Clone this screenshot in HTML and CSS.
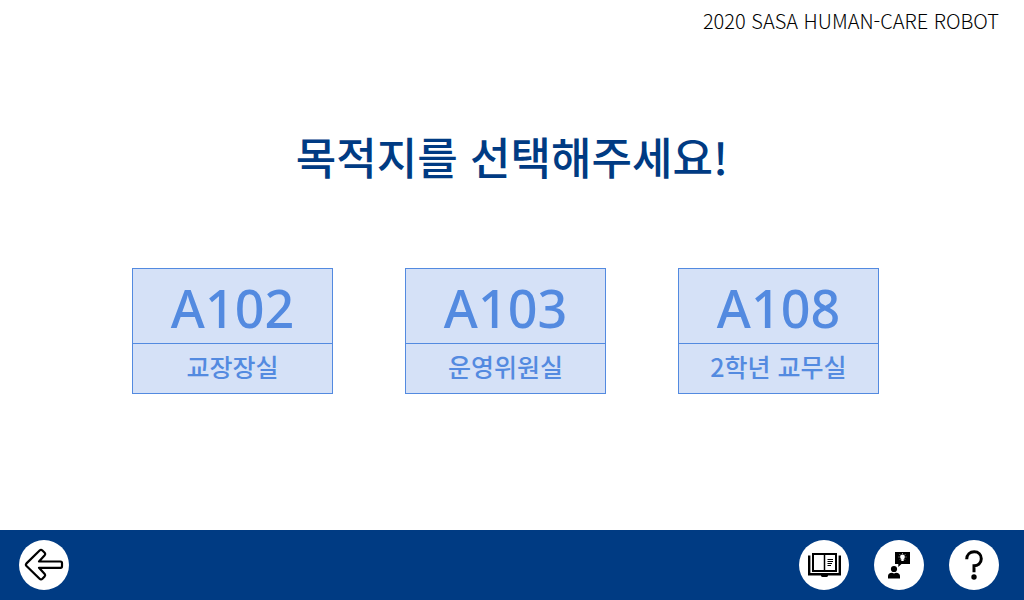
FILE: index.html
```html
<!DOCTYPE html>
<html lang="ko">
<head>
<meta charset="utf-8">
<meta name="viewport" content="width=device-width, initial-scale=1">
<title>2020 SASA HUMAN-CARE ROBOT</title>
<link rel="stylesheet" href="styles.css">
</head>
<body class="screen">
<header class="brand">2020 SASA HUMAN-CARE ROBOT</header>
<main class="content">
  <h1 class="title">목적지를 선택해주세요!</h1>
  <div class="rooms">
    <button class="room" type="button"><span class="room-number">A102</span><span class="room-name">교장장실</span></button>
    <button class="room" type="button"><span class="room-number">A103</span><span class="room-name">운영위원실</span></button>
    <button class="room" type="button"><span class="room-number">A108</span><span class="room-name">2학년 교무실</span></button>
  </div>
</main>
<footer class="toolbar">
  <button class="round" type="button" aria-label="뒤로">
    <svg class="icon" viewBox="0 0 50 50" fill="none" stroke="#000" stroke-width="2.2" stroke-linejoin="round"><path d="M7.5 23.400 20.600 10.500Q22 9.300 23.400 10.500L25.700 12.700Q26.800 14 25.700 15.300L20 21.500H41.500Q43 21.500 43 23V26.300Q43 27.800 41.500 27.800H20L25.700 34Q26.700 35.300 25.600 36.500L23.400 38.800Q22 40.200 20.600 38.800L7.500 26Q6.300 24.700 7.500 23.400Z"/></svg>
  </button>
  <div class="tools">
    <button class="round" type="button" aria-label="안내 책자">
      <svg class="icon" viewBox="0 0 50 50" fill="none" stroke="#000"><path stroke-width="2.400" d="M10.200 15.500V34.300H40.800V15.500"/><path stroke-width="2" d="M14 14H37V31H14Z"/><path stroke-width="1.500" d="M25.500 14V31"/><path stroke-width="1" d="M28.500 19.500H34M28.500 21.500H34M28.500 23.500H33M28.500 25.500H32"/><path fill="#000" stroke="none" d="M22 35H29V36Q28.500 37 27.500 37H23.500Q22.500 37 22 36Z"/></svg>
    </button>
    <button class="round" type="button" aria-label="도우미">
      <svg class="icon" viewBox="0 0 50 50"><path d="M21 12H36V24H27.500L24.300 27V24H21Z"/><circle cx="20" cy="29" r="3.100"/><path d="M14 38.500V36Q14 33 18 32.700L20 33.500 22 32.700Q26 33 26 36V38.500Z"/><circle cx="28.500" cy="17" r="2.400" fill="#fff"/><path fill="#fff" d="M27.300 18H29.700V21H27.300Z"/><path stroke="#fff" stroke-width=".6" d="M28.500 13V14M24.500 17H25.500M31.500 17H32.500M25.600 14.300 26.300 15M31.400 14.300 30.700 15M25.600 20 26.300 19.300M31.400 20 30.700 19.300"/></svg>
    </button>
    <button class="round" type="button" aria-label="도움말">
      <svg class="icon" viewBox="0 0 50 50"><path fill="none" stroke="#000" stroke-width="3" d="M17.700 19.300C17.700 14.500 21 11.800 25.200 11.800C29.500 11.800 32.300 14.800 32.300 18.800C32.300 23.500 28.500 25.800 25 25.800V32.300"/><circle cx="25" cy="37" r="2.700"/></svg>
    </button>
  </div>
</footer>
</body>
</html>
```
FILE: styles.css
```css
* { box-sizing: border-box; }
.screen {
  margin: 0;
  min-height: 100vh;
  display: flex;
  flex-direction: column;
  background: #fff;
  color: #003b83;
  font-family: "Noto Sans CJK KR", sans-serif;
}
.brand {
  padding: 7px 25px 0;
  text-align: right;
  color: #000;
  font-size: 20px;
  font-weight: 300;
  line-height: 28px;
}
.content {
  flex: 1;
  padding-top: 87px;
}
.title {
  margin: 0 0 78px;
  text-align: center;
  font-size: 44px;
  font-weight: 500;
  line-height: 68px;
}
.rooms {
  display: flex;
  justify-content: center;
  gap: 72px;
  padding-right: 13px;
}
.room {
  width: 201px;
  padding: 0;
  display: flex;
  flex-direction: column;
  border: 1px solid #538ae0;
  background: #d5e1f7;
  color: #538ae0;
  cursor: pointer;
}
.room-number {
  width: 100%;
  padding-top: 3px;
  border-bottom: 1px solid #538ae0;
  font-family: "Noto Sans", sans-serif;
  font-size: 52px;
  font-weight: 500;
  line-height: 71px;
}
.room-name {
  width: 100%;
  padding-bottom: 4px;
  font-size: 25px;
  font-family: "Noto Sans CJK KR", sans-serif;
  font-weight: 500;
  line-height: 45px;
}
.toolbar {
  display: flex;
  justify-content: space-between;
  align-items: center;
  padding: 10px 25px 10px 19px;
  background: #003b83;
}
.tools {
  display: flex;
  gap: 25px;
}
.round {
  width: 50px;
  height: 50px;
  padding: 0;
  border: 0;
  border-radius: 50%;
  background: #fff;
  cursor: pointer;
}
.icon {
  display: block;
  width: 50px;
  height: 50px;
}
```
